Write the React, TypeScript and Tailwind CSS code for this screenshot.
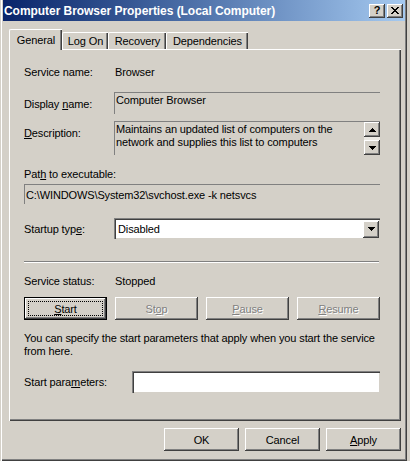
import React from 'react';

const raised =
  'bg-[#d4d0c8] shadow-[inset_-1px_-1px_#404040,inset_1px_1px_#fff,inset_-2px_-2px_#808080]';
const sunken =
  'border-t border-l border-[#808080] border-b-white border-r-white shadow-[inset_1px_1px_#404040,inset_-1px_-1px_#d4d0c8]';
const flat = 'border-t border-l border-[#808080] border-b-white border-r-white';
const disabledText = 'text-[#808080] [text-shadow:1px_1px_0_#fff]';

const Arrow = ({ up }: { up?: boolean }) => (
  <svg width="7" height="4" viewBox="0 0 7 4" shapeRendering="crispEdges">
    {up ? (
      <polygon points="3.5,0 7,4 0,4" fill="#000" />
    ) : (
      <polygon points="0,0 7,0 3.5,4" fill="#000" />
    )}
  </svg>
);

interface BtnProps {
  children: React.ReactNode;
  width: string;
  disabled?: boolean;
  focused?: boolean;
}

const Btn: React.FC<BtnProps> = ({ children, width, disabled, focused }) => {
  if (focused) {
    return (
      <div className={`${width} h-[23px] border border-black relative`}>
        <div className={`${raised} w-full h-full flex items-center justify-center`}>
          {children}
        </div>
        <div className="absolute inset-[3px] border border-dotted border-black" />
      </div>
    );
  }
  return (
    <div
      className={`${raised} ${width} h-[23px] flex items-center justify-center ${disabled ? disabledText : ''}`}
    >
      {children}
    </div>
  );
};

const Tab = ({ label, width }: { label: string; width: string }) => (
  <div
    className={`${width} h-[17px] border-t border-l border-white rounded-tl-[2px] shadow-[inset_-1px_0_#404040,inset_-2px_0_#808080] flex items-center justify-center`}
  >
    {label}
  </div>
);

export default function App() {
  return (
    <div className="w-[410px] h-[461px] bg-[#d4d0c8] font-['Liberation_Sans',Arial,sans-serif] text-[11px] leading-[14px] tracking-[-0.12px] text-black">
      <div className="w-[407px] h-[461px] pl-[3px] pr-[2px] flex flex-col shadow-[inset_1px_0_#d4d0c8,inset_2px_0_#fff,inset_-1px_-1px_#404040,inset_-2px_-2px_#808080]">
        {/* title bar */}
        <div className="h-[21px] shrink-0 flex items-center justify-between pl-[1px] pr-[2px] bg-linear-to-r from-[#0a246a] to-[#a6caf0]">
          <span className="text-white font-bold text-[12px] tracking-[-0.05px]">
            Computer Browser Properties (Local Computer)
          </span>
          <div className="flex gap-[2px]">
            <div className={`${raised} w-[16px] h-[14px] flex items-center justify-center font-bold text-[11px] leading-none`}>
              ?
            </div>
            <div className={`${raised} w-[16px] h-[14px] flex items-center justify-center`}>
              <svg width="8" height="7" viewBox="0 0 8 7" shapeRendering="crispEdges">
                <path d="M0 0h2v1h1v1h2v-1h1v-1h2v1h-1v1h-1v1h-1v1h1v1h1v1h1v1h-2v-1h-1v-1h-2v1h-1v1h-2v-1h1v-1h1v-1h1v-1h-1v-1h-1v-1h-1z" fill="#000" />
              </svg>
            </div>
          </div>
        </div>

        <div className="flex-1 flex flex-col pl-[6px] pr-[4px] pt-[8px]">
          {/* tabs */}
          <div className="flex items-end h-[20px]">
            <div className="relative z-10 -mb-px w-[53px] h-[21px] bg-[#d4d0c8] border-t border-l border-white rounded-tl-[2px] shadow-[inset_-1px_0_#404040,inset_-2px_0_#808080] flex items-center justify-center pb-[1px]">
              General
            </div>
            <Tab label="Log On" width="w-[46px]" />
            <Tab label="Recovery" width="w-[58px]" />
            <Tab label="Dependencies" width="w-[82px]" />
          </div>

          {/* panel */}
          <div className="h-[372px] border-t border-l border-white shadow-[inset_-1px_-1px_#404040,inset_-2px_-2px_#808080] flex flex-col pl-[14px]">
            <div className="mt-[14px] h-[16px] flex items-center">
              <span className="w-[90px]">Service name:</span>
              <span className="pl-[1px]">Browser</span>
            </div>

            <div className="mt-[12px] flex items-center">
              <span className="w-[90px] pt-[2px]">
                Display <u>n</u>ame:
              </span>
              <div className={`${flat} w-[266px] h-[22px] pl-[1px]`}>Computer Browser</div>
            </div>

            <div className="mt-[7px] flex items-start">
              <span className="w-[90px] pt-[5px]">
                <u>D</u>escription:
              </span>
              <div className={`${flat} w-[266px] h-[34px] flex`}>
                <div className="flex-1 pl-[1px] pt-[1px] leading-[13px]">
                  Maintains an updated list of computers on the
                  <br />
                  network and supplies this list to computers
                </div>
                <div className="w-[16px] flex flex-col">
                  <div className={`${raised} h-[15px] flex items-center justify-center`}>
                    <Arrow up />
                  </div>
                  <div className="flex-1 bg-[#ebe9e4]" />
                  <div className={`${raised} h-[15px] flex items-center justify-center`}>
                    <Arrow />
                  </div>
                </div>
              </div>
            </div>

            <div className="mt-[12px] h-[14px]">
              Pat<u>h</u> to executable:
            </div>
            <div className={`${flat} mt-[3px] w-[356px] h-[20px] pl-[1px] flex items-center`}>
              C:\WINDOWS\System32\svchost.exe -k netsvcs
            </div>

            <div className="mt-[14px] flex items-center">
              <span className="w-[90px]">
                Startup typ<u>e</u>:
              </span>
              <div className={`${sunken} w-[266px] h-[21px] bg-white flex items-center pl-[3px] pr-[1px]`}>
                <span className="flex-1">Disabled</span>
                <div className={`${raised} w-[16px] h-[17px] flex items-center justify-center`}>
                  <Arrow />
                </div>
              </div>
            </div>

            <div className="mt-[22px] w-[355px] border-t border-[#808080] border-b border-b-white" />

            <div className="mt-[11px] h-[14px] flex items-center">
              <span className="w-[90px]">Service status:</span>
              <span className="pl-[1px]">Stopped</span>
            </div>

            <div className="mt-[9px] flex gap-[8px]">
              <Btn width="w-[83px]" focused>
                <u>S</u>tart
              </Btn>
              <Btn width="w-[83px]" disabled>
                St<u>o</u>p
              </Btn>
              <Btn width="w-[83px]" disabled>
                <u>P</u>ause
              </Btn>
              <Btn width="w-[83px]" disabled>
                <u>R</u>esume
              </Btn>
            </div>

            <div className="mt-[12px] leading-[13px]">
              You can specify the start parameters that apply when you start the service
              <br />
              from here.
            </div>

            <div className="mt-[13px] flex items-center">
              <span className="w-[108px]">
                Start para<u>m</u>eters:
              </span>
              <div className={`${sunken} w-[248px] h-[22px] bg-white`} />
            </div>
          </div>

          {/* dialog buttons */}
          <div className="mt-[7px] flex justify-end gap-[6px]">
            <Btn width="w-[75px]">OK</Btn>
            <Btn width="w-[75px]">Cancel</Btn>
            <Btn width="w-[75px]">
              <u>A</u>pply
            </Btn>
          </div>
        </div>
      </div>
    </div>
  );
}
